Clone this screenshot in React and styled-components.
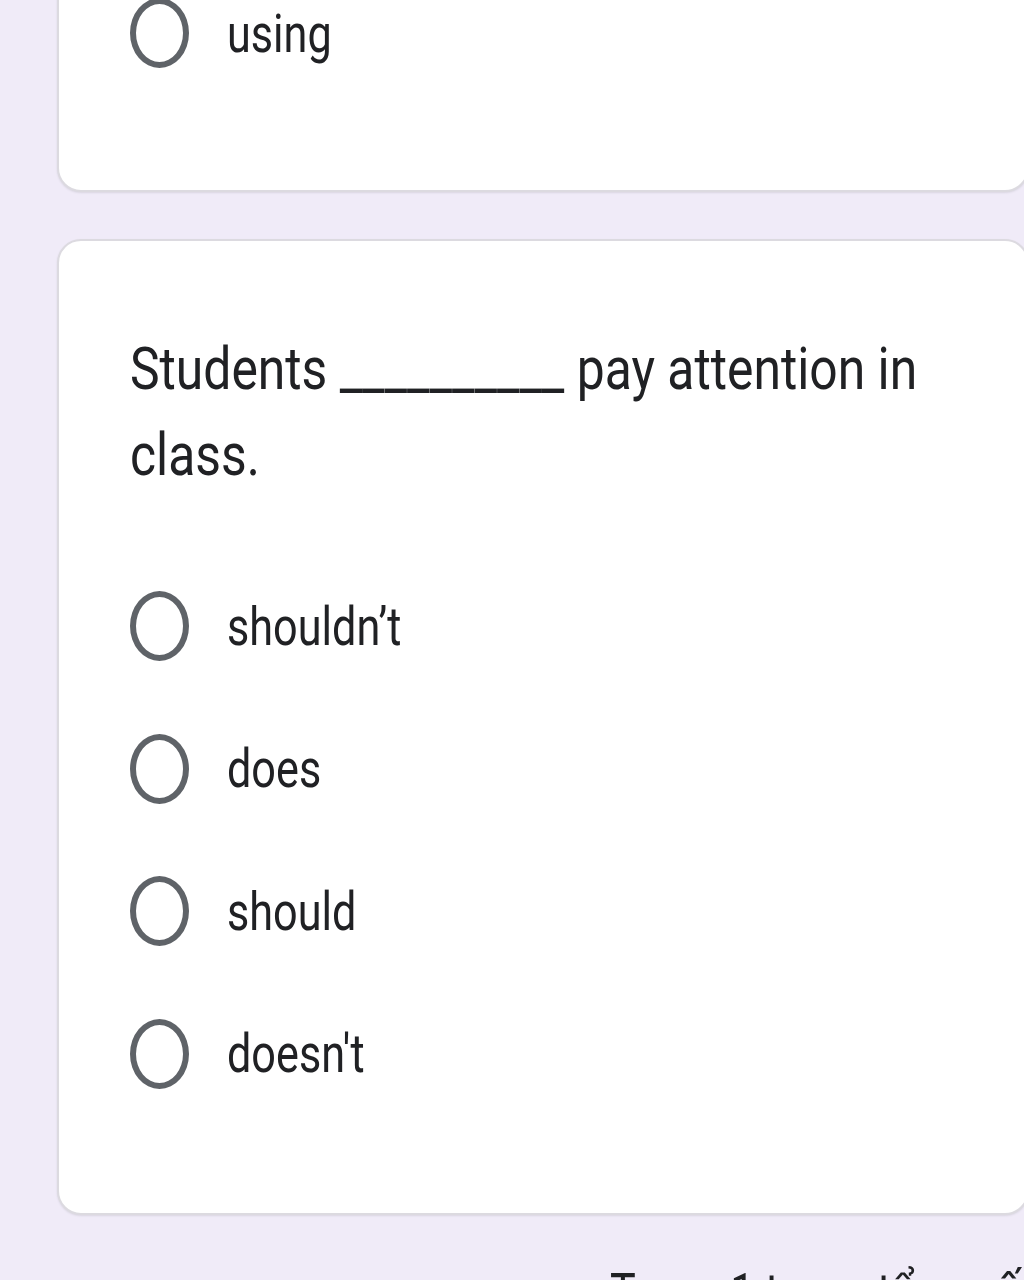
import React from 'react'
import styled, { createGlobalStyle } from 'styled-components'

const GlobalStyle = createGlobalStyle`
  html, body {
    margin: 0;
    padding: 0;
    background: #f0ebf8;
    overflow: hidden;
  }
  body {
    font-family: Roboto, "Liberation Sans", sans-serif;
    color: #202124;
  }
`

const Page = styled.div`
  width: 1024px;
  height: 1280px;
  overflow: hidden;
  background: #f0ebf8;
  padding-left: 57px;
  box-sizing: border-box;
  display: flex;
  flex-direction: column;
  gap: 47px;
`

const Card = styled.div`
  width: 972px;
  flex-shrink: 0;
  box-sizing: border-box;
  background: #fff;
  border: 2px solid #dcdae0;
  border-radius: 24px;
  box-shadow: 0 1px 2px rgba(60, 64, 67, 0.12);
  padding: ${p => p.$top}px 0 ${p => p.$bottom}px 71px;
  margin-top: ${p => p.$offset || 0}px;
`

/* the screenshot is squeezed sideways, so text is narrowed to match */
const Question = styled.div`
  font-size: 60px;
  line-height: 86px;
  width: 1000px;
  color: #202124;
  margin-bottom: 93px;
  transform: scaleX(0.83);
  transform-origin: left top;
`

const Options = styled.div`
  display: flex;
  flex-direction: column;
  gap: 72.5px;
`

const Option = styled.label`
  display: flex;
  align-items: center;
  gap: 38px;
  height: 70px;
  font-size: 54px;
  color: #202124;
`

const Narrow = styled.span`
  display: inline-block;
  white-space: nowrap;
  transform: scaleX(${p => p.$x || 0.8});
  transform-origin: left center;
`

const Radio = styled.span`
  display: block;
  width: 59px;
  height: 70px;
  box-sizing: border-box;
  border: 6px solid #5f6368;
  border-radius: 50%;
  flex-shrink: 0;
`

const Footer = styled.div`
  flex-shrink: 0;
  padding-left: 553px;
  margin-top: -1px;
  font-size: 54px;
  line-height: 64px;
  white-space: nowrap;
  color: #202124;
`

const options = ['shouldn’t', 'does', 'should', "doesn't"]

export default function App() {
  return (
    <Page>
      <GlobalStyle />
      <Card $offset={-60} $top={56} $bottom={122}>
        <Options>
          <Option>
            <Radio />
            <Narrow>using</Narrow>
          </Option>
        </Options>
      </Card>
      <Card $top={85} $bottom={124}>
        <Question>Students __________ pay attention in class.</Question>
        <Options>
          {options.map(o => (
            <Option key={o}>
              <Radio />
              <Narrow>{o}</Narrow>
            </Option>
          ))}
        </Options>
      </Card>
      <Footer>
        <Narrow>Trang 1 trong tổng số 2</Narrow>
      </Footer>
    </Page>
  )
}
